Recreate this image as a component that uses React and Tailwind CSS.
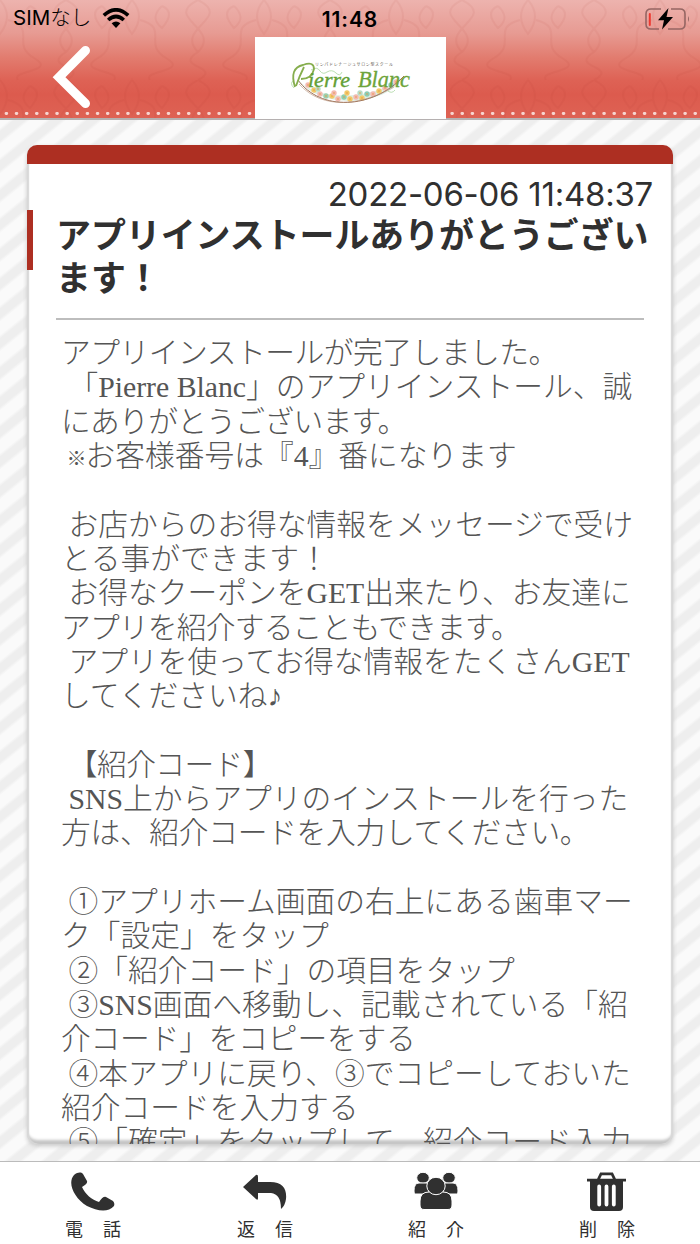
import React from "react";

const LINES = [
  "アプリインストールが完了しました。",
  " 「Pierre Blanc」のアプリインストール、誠",
  "にありがとうございます。",
  " ※お客様番号は『4』番になります",
  "",
  " お店からのお得な情報をメッセージで受け",
  "とる事ができます！",
  " お得なクーポンをGET出来たり、お友達に",
  "アプリを紹介することもできます。",
  " アプリを使ってお得な情報をたくさんGET",
  "してくださいね♪",
  "",
  " 【紹介コード】",
  " SNS上からアプリのインストールを行った",
  "方は、紹介コードを入力してください。",
  "",
  " ①アプリホーム画面の右上にある歯車マー",
  "ク「設定」をタップ",
  " ②「紹介コード」の項目をタップ",
  " ③SNS画面へ移動し、記載されている「紹",
  "介コード」をコピーをする",
  " ④本アプリに戻り、③でコピーしておいた",
  "紹介コードを入力する",
  " ⑤「確定」をタップして、紹介コード入力",
];

// Lines whose glyphs are set slightly wider or tighter than the rest.
const TRACKING = {
  0: "tracking-[-0.5px]",
  2: "tracking-[-0.7px]",
  8: "tracking-[-0.8px]",
  14: "tracking-[-0.3px]",
  20: "tracking-[-0.2px]",
  12: "tracking-[-0.6px]",
};

const FLOWERS = [
  [22, 29, "#f3b9b0"], [28, 34, "#f2c968"], [34, 38, "#f3b9b0"], [40, 40, "#9dcfae"],
  [46, 40, "#f2c968"], [52, 43, "#f3b9b0"], [58, 41, "#8fcfae"], [64, 43, "#f2c968"],
  [70, 41, "#f3b9b0"], [76, 42, "#f2c968"], [81, 38, "#8ccdb4"], [87, 38, "#f3b9b0"],
  [93, 35, "#f2c968"], [99, 32, "#f3b9b0"], [105, 29, "#8ccdb4"], [110, 26, "#f3b9b0"],
  [32, 33, "#b8dcc5"], [48, 37, "#f3b9b0"], [61, 37, "#f2c968"], [74, 37, "#b8dcc5"],
];

function Logo() {
  return (
    <svg viewBox="0 0 130 50" className="h-[50px] w-[130px]">
      <path d="M13 22C30 40 82 44 117 18C102 46 38 52 13 22Z" fill="#dceee4" />
      {FLOWERS.map(([x, y, c], i) => (
        <g key={i}>
          <circle cx={x} cy={y - 3} r="2.7" fill={c} />
          <circle cx={x} cy={y - 3} r=".8" fill="#e79a45" />
        </g>
      ))}
      <path d="M12 21C34 52 86 51 118 17" fill="none" stroke="#9b7058" strokeWidth="1" />
      <path d="M13 25C37 52 76 46 108 28" fill="none" stroke="#b58e76" strokeWidth=".6" />
      <path d="M25 11q6-4 9 1q3 4 7 1q5-3 9 1q4 4 6-1M8 29q-5-5 0-8M102 32q4 3 7-1" fill="none" stroke="#a9d5a0" strokeWidth=".8" />
      <path d="M9 28Q3 9 17 6Q28 2 28 10Q26 20 15 20M18 8Q13 18 10 27" fill="none" stroke="#86ae4e" strokeWidth="1.8" />
      <text x="22" y="28" textLength="42" lengthAdjust="spacingAndGlyphs" fontSize="20" fontStyle="italic" fontFamily="'Liberation Serif', serif" stroke="#639f35" strokeWidth=".35" fill="#639f35">ierre</text>
      <text x="72" y="28" textLength="52" lengthAdjust="spacingAndGlyphs" fontSize="24" fontStyle="italic" fontFamily="'Liberation Serif', serif" stroke="#6da43a" strokeWidth=".35" fill="#6da43a">Blanc</text>
      <text x="29" y="7" textLength="78" fontSize="4" fontFamily="'Noto Sans CJK JP', sans-serif" fill="#655b50">リンパドレナージュサロン型スクール</text>
    </svg>
  );
}

function Header() {
  return (
    <header className="relative h-[120px] shrink-0 border-b-2 border-[#b5b0b0] bg-[linear-gradient(180deg,#edb3ae_0%,#e79b93_28%,#e27d70_48%,#de6255_68%,#dc5b4e_80%,#de6254_100%)]">
      <svg className="absolute inset-0 h-[118px] w-full opacity-[.055]">
        <defs>
          <pattern id="damask" width="132" height="80" patternUnits="userSpaceOnUse">
            <path d="M66 0C30 18 90 28 66 52C40 68 92 66 66 80M66 0C102 18 42 28 66 52M8 20C38 28 10 44 34 58S10 70 18 80M124 20C94 28 122 44 98 58S122 70 114 80M30 6q14 6 0 22q-13-10 0-22M102 6q-14 6 0 22q13-10 0-22M0 0q14 16 0 34q-14 18 0 46M132 0q-14 16 0 34q14 18 0 46" fill="none" stroke="#a52a20" strokeWidth="2" />
          </pattern>
        </defs>
        <rect width="100%" height="100%" fill="url(#damask)" />
      </svg>
      <svg className="absolute bottom-[3px] left-0 h-[3px] w-full">
        <line x1="6" y1="1.5" x2="700" y2="1.5" stroke="#f7d5d0" strokeWidth="2.8" strokeLinecap="round" strokeDasharray=".8 9.33" />
      </svg>
      <div className="relative grid h-[37px] grid-cols-3 items-center font-['Inter','Noto_Sans_CJK_JP',sans-serif] text-black">
        <div className="flex items-center pl-[13px]">
          <span className="w-[79px] whitespace-nowrap text-[20.5px] font-light leading-none"><span className="font-normal">SIM</span>なし</span>
          <svg viewBox="0 0 28 21" className="ml-[10px] h-[21px] w-[28px]">
            <path d="M1.8 7.4Q14-3.8 26.2 7.4M6.2 12Q14 5 21.8 12" fill="none" stroke="#000" strokeWidth="3.6" />
            <path d="M9.6 15.2Q14 11.6 18.4 15.2L14 20Z" />
          </svg>
        </div>
        <div className="pt-[1px] text-center text-[21px] font-semibold leading-none tracking-[.9px]">11:48</div>
        <div className="flex justify-end pr-[10px]">
          <svg viewBox="0 0 46 24" className="h-[24px] w-[46px]">
            <path d="M17 2H7Q2 2 2 7V17Q2 22 7 22H15M27 2H36Q41 2 41 7V17Q41 22 36 22H24" fill="none" stroke="#956663" strokeWidth="1.6" />
            <path d="M5.8 7V18" stroke="#ee3930" strokeWidth="2" strokeLinecap="round" />
            <path d="M44 9Q46 12 44 15Z" fill="#956663" />
            <path d="M24.5 1L14 13.3H20L18 22.5L29 10H22.5Z" />
          </svg>
        </div>
      </div>
      <div className="relative flex h-[82px] justify-between">
        <button aria-label="戻る" className="flex w-[255px] items-start pl-[52px] pt-[8px]">
          <svg viewBox="0 0 40 64" className="h-[64px] w-[40px]">
            <path d="M33.5 5.5L7 32.3L33.5 58.5" fill="none" stroke="#fff" strokeWidth="9" strokeLinecap="round" />
          </svg>
        </button>
        <div className="flex w-[191px] items-start justify-center bg-white pt-[22px]"><Logo /></div>
        <div className="w-[254px]" />
      </div>
    </header>
  );
}

const ICONS = {
  phone: <path fill="#303030" d="M3 3C7 0 10 0 12 2L16 9Q17 12 11 15C14 22 21 28 28 30Q32 24 35 25L42 29Q44 31 43 34C37 41 26 39 16 34C3 26-4 11 3 3Z" />,
  reply: <path fill="#303030" d="M0 15L13 3Q15 2 15 5V10H27C40 10 44 17 43 27Q42 34 38 37Q38 22 28 21H15V26Q15 29 13 27Z" />,
  group: (
    <g fill="#303030" stroke="#fff" strokeWidth="1">
      <ellipse cx="9" cy="5.8" rx="6.3" ry="5.5" /><ellipse cx="35" cy="5.8" rx="6.3" ry="5.5" />
      <path d="M0 19Q0 11 5 11H15V22H1Q0 22 0 19ZM44 19Q44 11 39 11H29V22H43Q44 22 44 19Z" />
      <path d="M6 29Q6 20 15 20H29Q38 20 38 29V33Q38 37.5 34 37.5H10Q6 37.5 6 33Z" />
      <ellipse cx="22" cy="14" rx="9.2" ry="8.7" />
    </g>
  ),
  trash: (
    <g transform="translate(2 0)">
      <path fill="#303030" d="M3 8H36V35Q36 39 32 39H7Q3 39 3 35Z" />
      <path d="M0 8.2H39M11 8L14 1.8H25L28 8" fill="none" stroke="#303030" strokeWidth="2.8" />
      <path d="M12.2 14.5V32.5M19.5 14.5V32.5M26.8 14.5V32.5" stroke="#fff" strokeWidth="3.8" strokeLinecap="round" />
    </g>
  ),
};

function NavItem({ icon, label }) {
  return (
    <button className="flex flex-col items-center pt-[10px]">
      <svg viewBox="0 0 44 40" className="h-[40px] w-[44px]">{ICONS[icon]}</svg>
      <span className="mt-[6px] flex w-[56px] justify-between font-['Noto_Sans_CJK_JP',sans-serif] text-[18px] leading-[20px] text-[#303030]">
        <span>{label[0]}</span><span>{label[1]}</span>
      </span>
    </button>
  );
}

export default function App() {
  return (
    <div className="flex h-[1244px] w-[700px] flex-col overflow-hidden bg-white">
      <Header />
      <main className="relative h-[1041px] shrink-0 bg-[repeating-linear-gradient(141deg,#fafafa_0px,#fafafa_6px,#eeeeee_9px,#eeeeee_16px,#fafafa_19px,#fafafa_23px)] px-[27px] pt-[25px]">
        <article className="flex h-[999px] flex-col overflow-hidden rounded-[10px] bg-white shadow-[inset_2px_0_1px_#d8d8d8,inset_-2px_0_1px_#d8d8d8,inset_0_-4px_3px_#c4c4c4,0_2px_4px_#c8c8c8]">
          <div className="h-[19px] shrink-0 bg-[#ad2f22]" />
          <div className="h-[28px] shrink-0 pr-[20px] pt-[12px] text-right font-['Inter',sans-serif] text-[33px] leading-[36px] tracking-[-0.25px] text-[#303030]">2022-06-06 11:48:37</div>
          <h1 className="mx-[29px] mt-[20px] h-[108px] shrink-0 whitespace-nowrap border-b-2 border-[#bdbdbd] font-['Noto_Sans_CJK_JP',sans-serif] text-[34.9px] font-bold leading-[43px] text-[#303030]">
            アプリインストールありがとうござい<br />ます！
          </h1>
          <div className="ml-[34px] mt-[16px] font-['Liberation_Serif','Noto_Sans_CJK_JP',serif] text-[29.75px] font-light leading-[34.32px] text-[#555]">
            {LINES.map((line, i) => (
              <p key={i} className={`h-[34.32px] whitespace-pre ${TRACKING[i] || ""}`}>
                {line.includes("※")
                  ? <> <span className="-ml-[2px] inline-block w-[19px] text-[20px] font-bold">※</span>{line.slice(2)}</>
                  : line}
              </p>
            ))}
          </div>
        </article>
        <div className="absolute left-[27px] top-[90px] h-[60px] w-[6px] bg-[#ad2f22]" />
      </main>
      <nav className="grid h-[83px] shrink-0 grid-cols-[186px_158px_184px_158px] border-t border-[#bbb] bg-white">
        <NavItem icon="phone" label="電話" />
        <NavItem icon="reply" label="返信" />
        <NavItem icon="group" label="紹介" />
        <NavItem icon="trash" label="削除" />
      </nav>
    </div>
  );
}
